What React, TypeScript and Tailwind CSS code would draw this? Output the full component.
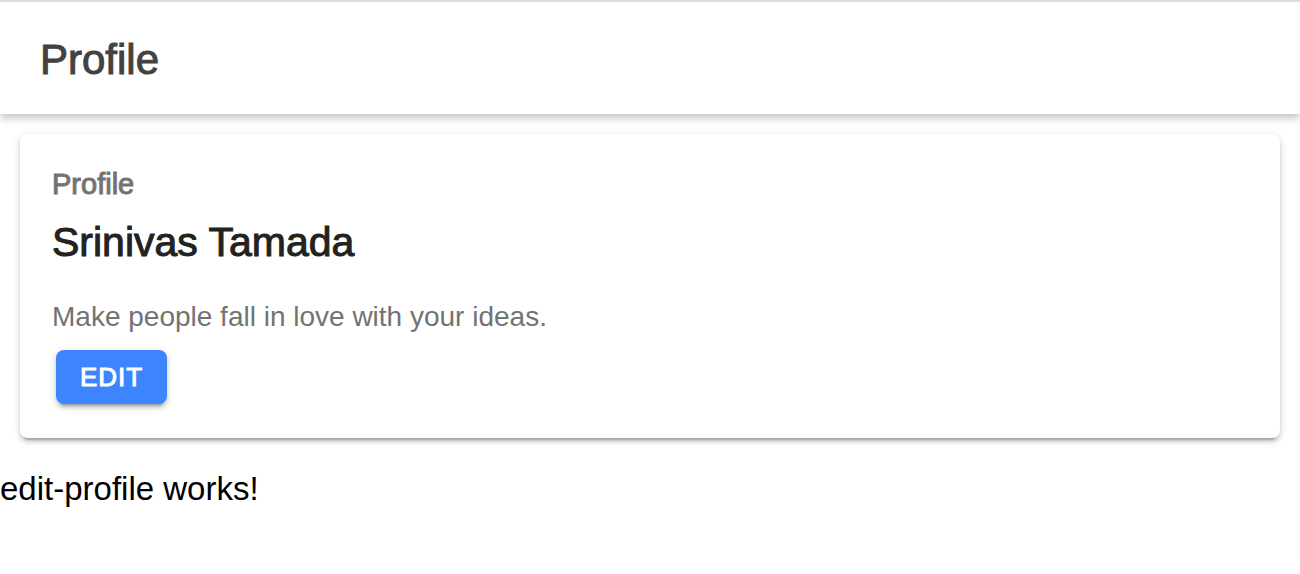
export default function App() {
  return (
    <div className="min-h-screen bg-white font-['Liberation_Sans',Arial,sans-serif] text-black">
      <header className="border-t-2 border-[#dcdce0] bg-white px-10 pt-[34px] pb-[30px] shadow-[0_4px_8px_rgba(0,0,0,0.24)]">
        <h1 className="text-[42px] leading-12 text-[#424242] [-webkit-text-stroke:1px_#424242]">Profile</h1>
      </header>
      <main>
        <section className="m-5 rounded-lg bg-white px-8 pt-8 pb-[34px] shadow-[0_6px_2px_-4px_rgba(0,0,0,0.2),0_4px_4px_0_rgba(0,0,0,0.14),0_2px_10px_0_rgba(0,0,0,0.12)]">
          <h3 className="text-[29px] leading-9 text-[#737373] [-webkit-text-stroke:1px_#737373]">Profile</h3>
          <h2 className="mt-4 text-[41px] leading-12 text-[#222222] [-webkit-text-stroke:1px_#222222]">Srinivas Tamada</h2>
          <p className="mt-8 text-[28px] leading-[38px] text-[#737373]">Make people fall in love with your ideas.</p>
          <button type="button" className="mx-1 mt-[14px] flex h-[54px] items-center rounded-lg bg-[#3d84ff] px-6 text-[26px] tracking-[1px] text-white shadow-[0_6px_2px_-4px_rgba(0,0,0,0.2),0_4px_4px_0_rgba(0,0,0,0.14),0_2px_10px_0_rgba(0,0,0,0.12)] [-webkit-text-stroke:1px_#ffffff]">EDIT</button>
        </section>
        <p className="mt-8 text-[33px] leading-[38px]">edit-profile works!</p>
      </main>
    </div>
  );
}
